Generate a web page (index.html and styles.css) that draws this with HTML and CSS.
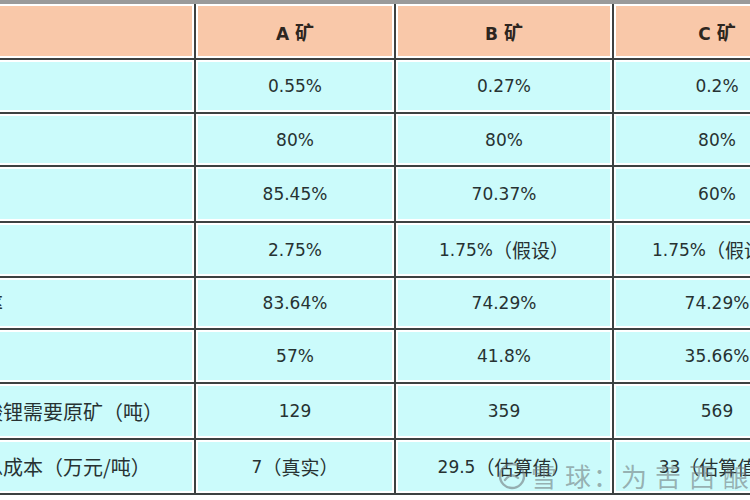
FILE: index.html
```html
<!DOCTYPE html>
<html lang="zh-CN">
<head>
<meta charset="utf-8">
<title>锂矿对比</title>
<link rel="stylesheet" href="styles.css">
</head>
<body>
<div class="page">
  <div class="sheet">
    <div class="cell head label"></div>
    <div class="cell head"><b>A <span class="zh">矿</span></b></div>
    <div class="cell head"><b>B <span class="zh">矿</span></b></div>
    <div class="cell head"><b>C <span class="zh">矿</span></b></div>

    <div class="cell label"><span class="zh">品位</span></div>
    <div class="cell">0.55%</div>
    <div class="cell">0.27%</div>
    <div class="cell">0.2%</div>

    <div class="cell label"><span class="zh">回收率</span></div>
    <div class="cell">80%</div>
    <div class="cell">80%</div>
    <div class="cell">80%</div>

    <div class="cell label"><span class="zh">转化率</span></div>
    <div class="cell">85.45%</div>
    <div class="cell">70.37%</div>
    <div class="cell">60%</div>

    <div class="cell label"><span class="zh">损耗率</span></div>
    <div class="cell">2.75%</div>
    <div class="cell">1.75%<span class="zh">（假设）</span></div>
    <div class="cell">1.75%<span class="zh">（假设）</span></div>

    <div class="cell label"><span class="zh">总回收率</span></div>
    <div class="cell">83.64%</div>
    <div class="cell">74.29%</div>
    <div class="cell">74.29%</div>

    <div class="cell label"><span class="zh">毛利率</span></div>
    <div class="cell">57%</div>
    <div class="cell">41.8%</div>
    <div class="cell">35.66%</div>

    <div class="cell label"><span class="zh">一吨碳酸锂需要原矿（吨）</span></div>
    <div class="cell">129</div>
    <div class="cell">359</div>
    <div class="cell">569</div>

    <div class="cell label"><span class="zh">碳酸锂总成本（万元/吨）</span></div>
    <div class="cell">7<span class="zh">（真实）</span></div>
    <div class="cell">29.5<span class="zh">（估算值）</span></div>
    <div class="cell">33<span class="zh">（估算值）</span></div>
  </div>

  <div class="watermark">
    <svg class="logo" viewBox="0 0 30 30" width="30" height="30" aria-hidden="true">
      <circle cx="15" cy="15" r="12" fill="none" stroke="currentColor" stroke-width="2.4"/>
      <path d="M8 19 C 11 14, 17 13, 21 17" fill="none" stroke="currentColor" stroke-width="2.4" stroke-linecap="round"/>
    </svg>
    <span class="wm-text">雪球</span>
    <span class="wm-sep">：</span>
    <span class="wm-text">为苦西酿造</span>
  </div>
</div>
</body>
</html>
```

FILE: styles.css
```css
html, body {
  margin: 0;
  padding: 0;
  background: #ffffff;
  overflow: hidden;
}

.page {
  position: relative;
  width: 750px;
  height: 500px;
  overflow: hidden;
}

.sheet {
  display: grid;
  grid-template-columns: 294px 198px 216px 206px;
  grid-template-rows: 54px 52px 51px 54px 53px 50px 52px 54px 53px;
  gap: 2px;
  width: max-content;
  margin-left: -100px;
  background: #3d4141;
  border-top: 4px solid #9a9a9a;
  border-bottom: 2px solid #3d4141;
  font-family: "DejaVu Sans", "Noto Sans CJK SC", sans-serif;
  font-size: 17px;
  color: #273232;
}

.cell {
  box-sizing: border-box;
  border: 2px solid #ffffff;
  background: #cbfbfb;
  display: flex;
  align-items: center;
  justify-content: center;
  white-space: nowrap;
  overflow: hidden;
}

.cell.head {
  background: #f9c8a9;
  color: #2e2620;
}

.cell.head b {
  font-weight: bold;
}

.cell.label {
  justify-content: flex-start;
  padding-left: 21px;
}

.zh {
  font-family: "Noto Sans CJK SC", sans-serif;
  font-size: 19px;
}

.cell.label .zh {
  font-size: 20px;
}

.watermark {
  position: absolute;
  left: 497px;
  top: 457px;
  display: flex;
  align-items: center;
  color: rgba(105, 112, 115, 0.55);
  font-family: "Noto Sans CJK SC", sans-serif;
  font-size: 26px;
  white-space: nowrap;
}

.logo {
  margin-right: 4px;
}

.wm-text {
  letter-spacing: 8px;
}

.wm-sep {
  margin: 0 2px 0 -6px;
}
```
